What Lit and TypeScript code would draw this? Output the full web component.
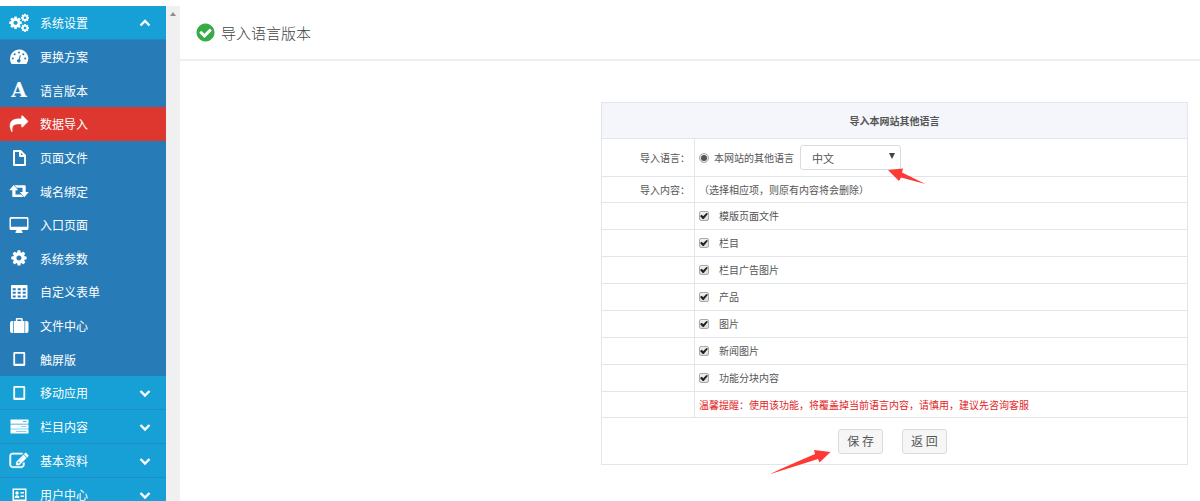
import { LitElement, html, svg, css, nothing } from "lit";
import { customElement, state } from "lit/decorators.js";
import { classMap } from "lit/directives/class-map.js";

const COG =
  "M1152 896q0-106-75-181t-181-75-181 75-75 181 75 181 181 75 181-75 75-181zm512-109v222q0 12-8 23t-20 13l-185 28q-19 54-39 91 35 50 107 138 10 12 10 25t-9 23q-27 37-99 108t-94 71q-12 0-26-9l-138-108q-44 23-91 38-16 136-29 186-7 28-36 28h-222q-14 0-24.5-8.5t-11.5-21.5l-28-184q-49-16-90-37l-141 107q-10 9-25 9-14 0-25-11-126-114-165-168-7-10-7-23 0-12 8-23 15-21 51-66.5t54-70.5q-27-50-41-99l-183-27q-13-2-21-12.5t-8-23.5v-222q0-12 8-23t19-13l186-28q14-46 39-92-40-57-107-138-10-12-10-24 0-10 9-23 26-36 98.5-107.5t94.5-71.5q13 0 26 10l138 107q44-23 91-38 16-136 29-186 7-28 36-28h222q14 0 24.5 8.5t11.5 21.5l28 184q49 16 90 37l142-107q9-9 24-9 13 0 25 10 129 119 165 170 7 8 7 22 0 12-8 23-15 21-51 66.5t-54 70.5q26 50 41 98l183 28q13 2 21 12.5t8 23.5z";
const SHARE =
  "M1792 640q0 26-19 45l-512 512q-19 19-45 19t-45-19-19-45v-256h-224q-98 0-175.500 6t-154 21.500-133 42.500-105.500 69.500-80 101-48.500 138.500-17.500 181q0 55 5 123 0 6 2.500 23.500t2.500 26.500q0 15-8.500 25t-23.500 10q-16 0-28-17-7-9-13-22t-13.500-30-10.500-24q-127-285-127-451 0-199 53-333 162-403 875-403h224v-256q0-26 19-45t45-19 45 19l512 512q19 19 19 45z";
const EDIT =
  "M888 1184l116-116-152-152-116 116v56h96v96h56zm440-720q-16-16-33 1l-350 350q-17 17-1 33t33-1l350-350q17-17 1-33zm80 594v190q0 119-84.5 203.5t-203.5 84.5h-832q-119 0-203.5-84.5t-84.5-203.5v-832q0-119 84.5-203.5t203.5-84.5h832q63 0 117 25 15 7 18 23 3 17-9 29l-49 49q-14 14-32 8-23-6-45-6h-832q-66 0-113 47t-47 113v832q0 66 47 113t113 47h832q66 0 113-47t47-113v-126q0-13 9-22l64-64q15-15 35-7t20 29zm-96-738l288 288-672 672h-288v-288zm444 132l-92 92-288-288 92-92q28-28 68-28t68 28l152 152q28 28 28 68t-28 68z";
const CHECK_CIRCLE =
  "M1412 734q0-28-18-46l-91-90q-19-19-45-19t-45 19l-408 407-226-226q-19-19-45-19t-45 19l-91 90q-18 18-18 46 0 27 18 45l362 362q19 19 45 19 27 0 46-19l543-543q18-18 18-45zm252 162q0 209-103 385.5t-279.5 279.5-385.5 103-385.5-103-279.5-279.5-103-385.5 103-385.5 279.5-279.5 385.5-103 385.5 103 279.5 279.5 103 385.5z";

// Menu icons, all drawn on a 20 x 20 canvas.
const icons: Record<string, unknown> = {
  cogs: svg`
    <path transform="translate(-0.8 2.4) scale(0.0082)" d=${COG} />
    <path transform="translate(11.3 0) scale(0.0053)" d=${COG} />
    <path transform="translate(11.3 10.2) scale(0.0053)" d=${COG} />`,
  gauge: svg`<path fill-rule="evenodd" d="M10 2.500a9 9 0 0 0-9 9c0 1.8.5 3.700 1.400 5.200.2.300.4.400.7.400h13.800c.3 0 .5-.1.7-.4A9 9 0 0 0 10 2.500zM3.800 10.500a1 1 0 1 1 0 2 1 1 0 0 1 0-2zM5.700 6.200a1 1 0 1 1 0 2 1 1 0 0 1 0-2zM10 4.400a1 1 0 1 1 0 2 1 1 0 0 1 0-2zM14.300 6.200a1 1 0 1 1 0 2 1 1 0 0 1 0-2zM16.200 10.500a1 1 0 1 1 0 2 1 1 0 0 1 0-2zM10.800 8.300l1 .3-1 3.700a1.800 1.800 0 1 1-1-.3z" />`,
  share: svg`<path class="bold" transform="translate(1 1) scale(0.01)" d=${SHARE} />`,
  file: svg`<path class="line" d="M5 3h6.500L16 7.500V17H5zM11 3v5h5" />`,
  retweet: svg`
    <path d="M4.700 4L9.200 9.300H6.500v4.200h5.800l2.200 2.500H4.300c-.7 0-1-.3-1-1V9.300H.2z" />
    <path d="M15.300 16.200L10.800 10.900h2.700V6.700H7.700L5.500 4.200h10.200c.7 0 1 .3 1 1v5.700h3.100z" />`,
  desktop: svg`<path fill-rule="evenodd" d="M2 2h16a1.500 1.500 0 0 1 1.500 1.500v10A1.500 1.500 0 0 1 18 15h-5.500l.5 1.500h.5V18h-7v-1.500H7L7.500 15H2a1.500 1.500 0 0 1-1.500-1.500v-10A1.500 1.500 0 0 1 2 2zm0 1.700v8.100h16V3.700z" />`,
  cog: svg`<path transform="translate(1.100 1.100) scale(0.0099)" d=${COG} />`,
  table: svg`<path fill-rule="evenodd" d="M3 3h14.500a1 1 0 0 1 1 1v12a1 1 0 0 1-1 1H3a1 1 0 0 1-1-1V4a1 1 0 0 1 1-1zm.700 3.200v2h3v-2zm5 0v2h3v-2zm5 0v2h3v-2zm-10 3.600v2h3v-2zm5 0v2h3v-2zm5 0v2h3v-2zm-10 3.600v2h3v-2zm5 0v2h3v-2zm5 0v2h3v-2z" />`,
  suitcase: svg`
    <path fill-rule="evenodd" d="M5 17V5h1.800V3.200c0-.7.500-1.200 1.200-1.200h4.500c.7 0 1.200.5 1.200 1.200V5h1.800v12zM8.300 5h4V3.500h-4z" />
    <path d="M4.300 5v12H3a2 2 0 0 1-2-2V7a2 2 0 0 1 2-2zM16.200 5v12h1.300a2 2 0 0 0 2-2V7a2 2 0 0 0-2-2z" />`,
  tablet: svg`<path fill-rule="evenodd" d="M5.500 3h9.500a1.200 1.200 0 0 1 1.200 1.200v11.600a1.200 1.200 0 0 1-1.200 1.200H5.500a1.200 1.200 0 0 1-1.200-1.200V4.200A1.200 1.200 0 0 1 5.500 3zm.6 1.700v10h8.300v-10z" />`,
  tasks: svg`<path fill-rule="evenodd" d="M1.500 2.500h18v4.300h-18zM14 4.200v.8h3.500v-.8zM1.500 7.400h18v4.300h-18zM12 9.200v.6h5.500v-.6zM1.500 12.300h18v4.200h-18zM7 14.200v.6h10.500v-.6z" />`,
  edit: svg`<path transform="translate(0.600 0.600) scale(0.0105)" class="bold" d=${EDIT} />`,
  card: svg`<path fill-rule="evenodd" d="M3.500 3.500h14v13h-14zM5 5v9.500h11V5zM8 6.300a1.700 1.700 0 1 1 0 3.400 1.700 1.700 0 0 1 0-3.400zM5.600 13c0-2 1-2.800 2.400-2.800s2.400.8 2.400 2.800zM11.500 7H15v1.500h-3.500zM11.500 10.500H15V12h-3.500z" />`,
};

const icon = (name: string) =>
  name === "font"
    ? html`<span class="icon letter" aria-hidden="true">A</span>`
    : html`<svg class="icon" viewBox="0 0 20 20" aria-hidden="true">${icons[name]}</svg>`;

@customElement("side-menu")
class SideMenu extends LitElement {
  @state() private active = "数据导入";

  private items = [
    ["gauge", "更换方案"],
    ["font", "语言版本"],
    ["share", "数据导入"],
    ["file", "页面文件"],
    ["retweet", "域名绑定"],
    ["desktop", "入口页面"],
    ["cog", "系统参数"],
    ["table", "自定义表单"],
    ["suitcase", "文件中心"],
    ["tablet", "触屏版"],
  ];
  private groups = [
    ["tablet", "移动应用"],
    ["tasks", "栏目内容"],
    ["edit", "基本资料"],
    ["card", "用户中心"],
  ];

  static styles = css`
    :host {
      display: block;
      overflow: hidden;
      background: #277cb8;
      color: #fff;
      font-size: 12px;
    }
    .row {
      box-sizing: border-box;
      display: flex;
      align-items: center;
      gap: 11px;
      width: 100%;
      height: 34px;
      padding: 0 15px 0 9px;
      border: 0;
      background: none;
      color: inherit;
      font: inherit;
      text-align: left;
      text-decoration: none;
    }
    .group {
      background: #16a0d6;
      border-bottom: 1px solid #1f8cc6;
    }
    .items {
      display: grid;
      grid-auto-rows: 1fr;
      height: 336px;
      margin: 0;
      padding: 0;
      list-style: none;
    }
    .items .row {
      height: 100%;
    }
    .active {
      background: #dd3730;
    }
    .label {
      flex: 1;
    }
    .icon {
      flex: none;
      width: 20px;
      height: 20px;
      fill: #fff;
    }
    .line {
      fill: none;
      stroke: #fff;
      stroke-width: 2;
      stroke-linejoin: round;
    }
    .bold {
      stroke: #fff;
      stroke-width: 50;
    }
    .letter {
      font: bold 20px/20px "DejaVu Serif", serif;
      text-align: center;
    }
    .chevron {
      width: 12px;
      height: 12px;
      fill: none;
      stroke: #fff;
      stroke-width: 2.4;
    }
  `;

  private group(name: string, label: string, open: boolean) {
    return html`<button type="button" class="row group" aria-expanded=${open}>
      ${icon(name)}<span class="label">${label}</span>
      <svg class="chevron" viewBox="0 0 12 12" aria-hidden="true">
        <path d=${open ? "M1.500 8.500L6 4l4.500 4.500" : "M1.500 4L6 8.500 10.500 4"} />
      </svg>
    </button>`;
  }

  render() {
    return html`<nav>
      ${this.group("cogs", "系统设置", true)}
      <ul class="items">
        ${this.items.map(
          ([name, label]) => html`<li>
            <a
              href="#"
              class=${classMap({ row: true, active: label === this.active })}
              aria-current=${label === this.active ? "page" : nothing}
              @click=${() => (this.active = label)}
              >${icon(name)}<span class="label">${label}</span></a
            >
          </li>`
        )}
      </ul>
      ${this.groups.map(([name, label]) => this.group(name, label, false))}
    </nav>`;
  }
}

@customElement("import-form")
class ImportForm extends LitElement {
  private contents = ["模版页面文件", "栏目", "栏目广告图片", "产品", "图片", "新闻图片", "功能分块内容"];

  static styles = css`
    :host {
      display: block;
      color: #555;
      font-size: 10px;
    }
    table {
      width: 100%;
      border-collapse: collapse;
      table-layout: fixed;
    }
    .col-name {
      width: 93px;
    }
    th,
    td {
      box-sizing: border-box;
      height: 26px;
      padding: 0 4px;
      border: 1px solid #e1e6eb;
      line-height: 16px;
      text-align: left;
      font-weight: normal;
    }
    thead th {
      height: 36px;
      background: #f4f6fb;
      text-align: center;
      font-weight: bold;
    }
    tbody th {
      text-align: right;
    }
    .language td {
      height: 38px;
    }
    .content td {
      height: 27px;
    }
    .actions td {
      height: 47px;
    }
    .warning {
      color: #e01f1f;
    }
    .line {
      display: flex;
      align-items: center;
      gap: 6px;
    }
    .option {
      display: flex;
      align-items: center;
      gap: 5px;
    }
    .content .option {
      gap: 10px;
    }
    input {
      appearance: none;
      box-sizing: border-box;
      display: grid;
      place-items: center;
      width: 10px;
      height: 10px;
      margin: 0;
      border: 1px solid #aaa;
      border-radius: 2px;
      background: linear-gradient(#f0f0f0, #dcdcdc);
    }
    input[type="radio"] {
      border-radius: 50%;
    }
    input[type="radio"]:checked::before {
      content: "";
      width: 6px;
      height: 6px;
      border-radius: 50%;
      background: #555;
    }
    input[type="checkbox"]:checked::before {
      content: "";
      width: 8px;
      height: 6px;
      background: #222;
      clip-path: polygon(0 50%, 22% 30%, 40% 55%, 80% 0, 100% 14%, 46% 100%, 34% 100%);
    }
    .picker {
      position: relative;
      display: block;
      width: 101px;
    }
    .picker::after {
      content: "";
      position: absolute;
      top: 8px;
      right: 6px;
      border: 3px solid transparent;
      border-top: 6px solid #444;
      border-bottom: 0;
    }
    select {
      appearance: none;
      box-sizing: border-box;
      display: block;
      width: 100%;
      height: 25px;
      padding: 0 11px;
      border: 1px solid #d8dce2;
      border-radius: 3px;
      background: #fff;
      color: #555;
      font: inherit;
      font-size: 11px;
    }
    .buttons {
      display: flex;
      justify-content: center;
      gap: 19px;
      padding-right: 4px;
    }
    .anchor {
      position: relative;
    }
    button {
      display: block;
      height: 25px;
      padding: 0 8px;
      border: 1px solid #d9dcdf;
      border-radius: 3px;
      background: #f6f6f6;
      color: #555;
      font: inherit;
      font-size: 12px;
    }
    .pointer {
      position: absolute;
      fill: #fd3a36;
      pointer-events: none;
    }
    .to-picker {
      left: 87px;
      top: 22px;
      width: 40px;
      height: 18px;
    }
    .to-save {
      right: 52px;
      top: 20px;
      width: 62px;
      height: 26px;
    }
  `;

  render() {
    return html`<form @submit=${(e: Event) => e.preventDefault()}>
      <table>
        <colgroup>
          <col class="col-name" />
          <col />
        </colgroup>
        <thead>
          <tr>
            <th colspan="2">导入本网站其他语言</th>
          </tr>
        </thead>
        <tbody>
          <tr class="language">
            <th scope="row">导入语言：</th>
            <td>
              <div class="line">
                <label class="option"><input type="radio" name="source" checked />本网站的其他语言</label>
                <div class="picker">
                  <select aria-label="本网站的其他语言">
                    <option>中文</option>
                  </select>
                  <svg class="pointer to-picker" viewBox="0 0 40 18" aria-hidden="true">
                    <path d="M1 3L16 1.500 15 5.500 38.500 17 14 10.500 12 14z" />
                  </svg>
                </div>
              </div>
            </td>
          </tr>
          <tr>
            <th scope="row">导入内容：</th>
            <td>（选择相应项，则原有内容将会删除）</td>
          </tr>
          ${this.contents.map(
            (name) => html`<tr class="content">
              <td></td>
              <td>
                <label class="option"><input type="checkbox" name="content" .value=${name} checked />${name}</label>
              </td>
            </tr>`
          )}
          <tr>
            <td></td>
            <td class="warning">温馨提醒：使用该功能，将覆盖掉当前语言内容，请慎用，建议先咨询客服</td>
          </tr>
          <tr class="actions">
            <td colspan="2">
              <div class="buttons">
                <div class="anchor">
                  <button type="submit">保 存</button>
                  <svg class="pointer to-save" viewBox="0 0 62 26" aria-hidden="true">
                    <path d="M1.500 25Q3 23.500 46 5L45 1 61.500 3 50.500 13.500 49 10z" />
                  </svg>
                </div>
                <button type="button">返 回</button>
              </div>
            </td>
          </tr>
        </tbody>
      </table>
    </form>`;
  }
}

@customElement("app-root")
class AppRoot extends LitElement {
  static styles = css`
    :host {
      box-sizing: border-box;
      display: grid;
      grid-template-columns: 166px 14px 1fr;
      height: 100vh;
      padding-top: 6px;
      overflow: hidden;
      background: #fff;
      font-family: "Noto Sans CJK SC", sans-serif;
    }
    .track {
      display: flex;
      justify-content: center;
      padding-top: 6px;
      background: #f0f0f0;
    }
    .track svg {
      width: 6px;
      height: 4px;
      fill: #8c8c8c;
    }
    .title {
      display: flex;
      align-items: center;
      gap: 5px;
      height: 53px;
      padding-left: 15px;
      border-bottom: 2px solid #eee;
    }
    .title svg {
      width: 21px;
      height: 21px;
      fill: #35ac45;
    }
    h1 {
      margin: 0;
      color: #444;
      font-size: 15px;
      font-weight: 300;
    }
    .body {
      display: grid;
      grid-template-columns: 421fr 587fr;
      padding: 41px 12px 0 0;
    }
    .body import-form {
      grid-column: 2;
    }
  `;

  render() {
    return html`
      <side-menu></side-menu>
      <div class="track">
        <svg viewBox="0 0 6 4" aria-hidden="true"><path d="M0 4l3-4 3 4z" /></svg>
      </div>
      <main>
        <header class="title">
          <svg viewBox="0 0 1792 1792" aria-hidden="true"><path d=${CHECK_CIRCLE} /></svg>
          <h1>导入语言版本</h1>
        </header>
        <div class="body"><import-form></import-form></div>
      </main>
    `;
  }
}
